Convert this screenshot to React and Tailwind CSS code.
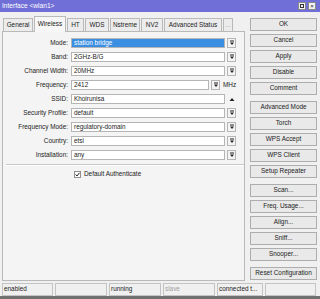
import React from "react";

const font = { fontFamily: '"Liberation Sans", Arial, sans-serif' };

function DropIcon() {
  return (
    <svg width="6" height="6" viewBox="0 0 6 6">
      <line x1="1" y1="1" x2="5" y2="1" stroke="#222" strokeWidth="1" />
      <path d="M1 2.5 L5 2.5 L3 5 Z" fill="#222" />
    </svg>
  );
}

function DropBox() {
  return (
    <div className="w-[9px] h-[10px] border border-[#b5b5b5] bg-[#f4f4f4] flex items-center justify-center shrink-0">
      <DropIcon />
    </div>
  );
}

function Row({ label, value, selected, kind = "drop" }) {
  return (
    <div className="flex items-center h-[10px]">
      <div className="w-[67px] text-right pr-[2px] text-[#222]">{label}</div>
      <div className="ml-[1px] flex items-center">
        {kind === "freq" ? (
          <>
            <div className="w-[138px] h-[10px] border border-[#b5b5b5] bg-white flex items-center px-[2px]">{value}</div>
            <div className="ml-[2px]"><DropBox /></div>
            <div className="ml-[3px] text-[#222]">MHz</div>
          </>
        ) : (
          <>
            <div
              className={
                selected
                  ? "w-[154px] h-[10px] border border-[#b5b5b5] bg-[#3b8fe3] text-white flex items-center px-[2px]"
                  : "w-[154px] h-[10px] border border-[#b5b5b5] bg-white flex items-center px-[2px]"
              }
            >
              {value}
            </div>
            <div className="ml-[2px]">
              {kind === "up" ? (
                <div className="w-[9px] h-[10px] flex items-center justify-center">
                  <svg width="6" height="5" viewBox="0 0 6 5"><path d="M0.5 4 L5.5 4 L3 1 Z" fill="#222" /></svg>
                </div>
              ) : (
                <DropBox />
              )}
            </div>
          </>
        )}
      </div>
    </div>
  );
}

function Btn({ children }) {
  return (
    <div className="h-[13px] border border-[#adadad] bg-[#e9e9e9] flex items-center justify-center text-[#222]">
      {children}
    </div>
  );
}

function Tab({ children, w, active }) {
  return active ? (
    <div
      className={`${w} h-[16px] -mb-[1px] border border-b-0 border-[#b9b9b9] bg-[#f7f7f7] flex items-center justify-center relative z-10 self-end`}
    >
      {children}
    </div>
  ) : (
    <div className={`${w} h-[13px] border border-b-0 border-[#b9b9b9] bg-[#ececec] flex items-center justify-center self-end`}>
      {children}
    </div>
  );
}

export default function App() {
  return (
    <div style={font} className="w-[320px] h-[299px] bg-[#f0f0f0] flex flex-col text-[6.4px] leading-none text-[#222] overflow-hidden">
      {/* Title bar */}
      <div className="h-[12px] bg-[#6f6fd7] flex items-center justify-between pl-[2px] pr-[4px] shrink-0">
        <span className="text-white text-[6.6px]">Interface &lt;wlan1&gt;</span>
        <div className="flex gap-[2px]">
          <div className="w-[8px] h-[8px] bg-[#f2f2f2] border border-[#8a8a8a] flex items-center justify-center">
            <div className="w-[4px] h-[4px] border border-[#333]" />
          </div>
          <div className="w-[8px] h-[8px] bg-[#f2f2f2] border border-[#8a8a8a] flex items-center justify-center text-[6px] text-[#222]">
            ×
          </div>
        </div>
      </div>

      <div className="flex flex-1 min-h-0">
        {/* left */}
        <div className="w-[243px] ml-[2px] flex flex-col pt-[3px] pb-[1px]">
          <div className="flex h-[16px] pl-[1px] gap-[1px] items-end">
            <Tab w="w-[30px]">General</Tab>
            <Tab w="w-[32px]" active>Wireless</Tab>
            <Tab w="w-[17px]">HT</Tab>
            <Tab w="w-[24px]">WDS</Tab>
            <Tab w="w-[30px]">Nstreme</Tab>
            <Tab w="w-[22px]">NV2</Tab>
            <Tab w="w-[58px]">Advanced Status</Tab>
            <Tab w="w-[10px]"><span className="text-[#999]">...</span></Tab>
          </div>
          <div className="flex-1 border border-[#b9b9b9] bg-[#f4f4f4] flex flex-col pt-[6px]">
            <div className="flex flex-col gap-[4px]">
              <Row label="Mode:" value="station bridge" selected />
              <Row label="Band:" value="2GHz-B/G" />
              <Row label="Channel Width:" value="20MHz" />
              <Row label="Frequency:" value="2412" kind="freq" />
              <Row label="SSID:" value="Khoirunisa" kind="up" />
              <Row label="Security Profile:" value="default" />
              <Row label="Frequency Mode:" value="regulatory-domain" />
              <Row label="Country:" value="etsi" />
              <Row label="Installation:" value="any" />
            </div>
            <div className="mt-[4px] ml-[3px] border-t border-[#c9c9c9] border-b border-b-white" />
            <div className="mt-[5px] ml-[71px] flex items-center gap-[3px]">
              <div className="w-[7px] h-[7px] border border-[#8f8f8f] bg-white flex items-center justify-center">
                <svg width="5" height="5" viewBox="0 0 5 5"><path d="M0.6 2.5 L2 4 L4.5 0.8" stroke="#222" strokeWidth="1" fill="none" /></svg>
              </div>
              <span>Default Authenticate</span>
            </div>
          </div>
        </div>

        {/* right */}
        <div className="w-[67px] ml-[5px] pt-[6px] flex flex-col gap-[3px]">
          <Btn>OK</Btn>
          <Btn>Cancel</Btn>
          <Btn>Apply</Btn>
          <Btn>Disable</Btn>
          <Btn>Comment</Btn>
          <div className="h-0" />
          <Btn>Advanced Mode</Btn>
          <Btn>Torch</Btn>
          <Btn>WPS Accept</Btn>
          <Btn>WPS Client</Btn>
          <Btn>Setup Repeater</Btn>
          <div className="h-0" />
          <Btn>Scan...</Btn>
          <Btn>Freq. Usage...</Btn>
          <Btn>Align...</Btn>
          <Btn>Sniff...</Btn>
          <Btn>Snooper...</Btn>
          <div className="h-0" />
          <Btn>Reset Configuration</Btn>
        </div>
      </div>

      {/* status bar */}
      <div className="h-[13px] flex pl-[2px] pr-[4px] gap-[2px] mt-[1px] shrink-0">
        <div className="w-[51px] border border-[#c4c4c4] flex items-center px-[1px]">enabled</div>
        <div className="w-[52px] border border-[#c4c4c4]" />
        <div className="w-[52px] border border-[#c4c4c4] flex items-center px-[1px]">running</div>
        <div className="w-[52px] border border-[#c4c4c4] flex items-center px-[1px] text-[#a0a0a0]">slave</div>
        <div className="w-[46px] border border-[#c4c4c4] flex items-center px-[1px]">connected t...</div>
        <div className="flex-1 border border-[#c4c4c4]" />
      </div>
      <div className="h-[3px] bg-[#707070] shrink-0" />
    </div>
  );
}
